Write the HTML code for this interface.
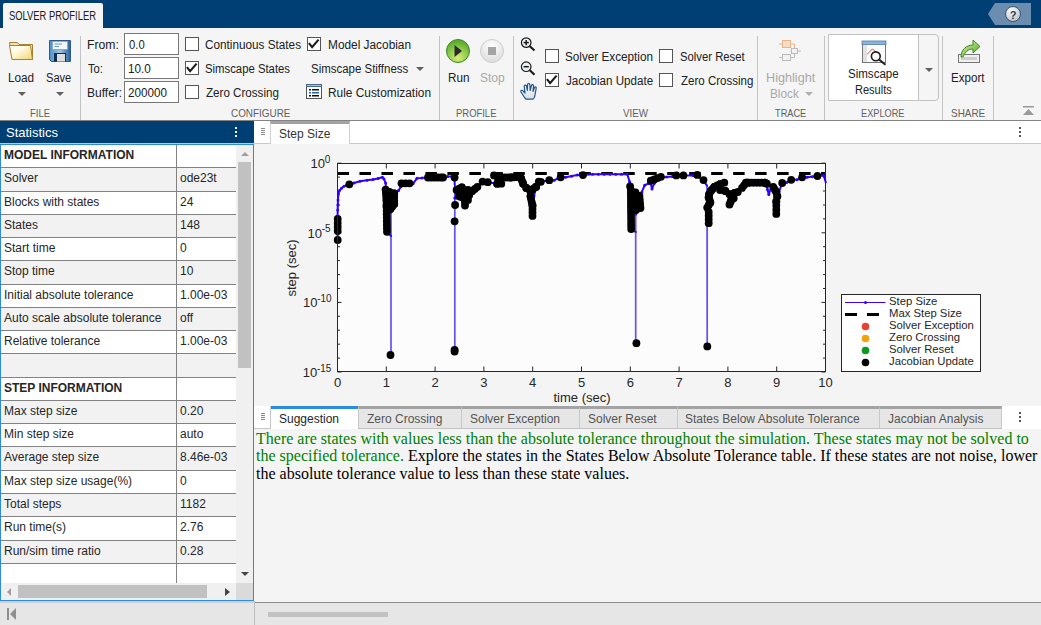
<!DOCTYPE html>
<html><head><meta charset="utf-8">
<style>
*{box-sizing:border-box;margin:0;padding:0}
html,body{width:1041px;height:625px;overflow:hidden;background:#f5f5f5;font-family:"Liberation Sans",sans-serif;}
.a{position:absolute}
.t{position:absolute;white-space:nowrap;line-height:1;color:#212121}
.ts{font-size:11.5px}
.lbl{font-size:11px;color:#5f5f5f;letter-spacing:-0.2px}
.sep{position:absolute;top:36px;height:84px;width:1px;background:#c4c4c4}
.cb{position:absolute;width:14px;height:14px;border:1px solid #555;background:#fff}
.cb svg{position:absolute;left:0;top:0}
.tb{position:absolute;width:55px;height:22px;border:1px solid #777;background:#fff;font-size:12px;padding-left:4px;line-height:20px;color:#212121}
.arr{position:absolute;width:0;height:0;border-left:4px solid transparent;border-right:4px solid transparent;border-top:4px solid #616161}
.row{position:absolute;left:1px;width:235px;border-bottom:1px solid #828282}
.c1{position:absolute;left:3px;font-size:12px;color:#262626;white-space:nowrap;line-height:1}
.c2{position:absolute;left:179px;font-size:12px;color:#262626;white-space:nowrap;line-height:1}
.tab{position:absolute;top:406px;height:23px;background:#e6e6e6;border-top:3px solid #a3a3a3;border-left:1px solid #c8c8c8;border-bottom:1px solid #c4c4c4;font-size:12px;color:#545454;line-height:1}
.tab span{position:absolute;top:4px;white-space:nowrap}
</style></head>
<body>
<!-- TOP BAR -->
<div class="a" style="left:0;top:0;width:1041px;height:28px;background:#003f74"></div>
<div class="a" style="left:3px;top:3px;width:100px;height:25px;background:#f5f5f5;border-radius:2px 2px 0 0"></div>
<!-- help -->
<svg class="a" style="left:985px;top:0" width="56" height="28">
 <polygon points="3,14 10,3 46,3 46,25 10,25" fill="#6b8db0"/>
 <defs><radialGradient id="hg" cx="40%" cy="30%" r="70%"><stop offset="0" stop-color="#ffffff"/><stop offset="1" stop-color="#b9c2cc"/></radialGradient></defs>
 <circle cx="28" cy="14" r="7.5" fill="url(#hg)" stroke="#2b3b55" stroke-width="0.8"/>
 <text x="28" y="18.5" text-anchor="middle" font-family="Liberation Sans" font-weight="700" font-size="11" fill="#2b3b55">?</text>
</svg>

<!-- RIBBON -->
<div class="a" style="left:0;top:120px;width:1041px;height:1px;background:#838383"></div>
<div class="sep" style="left:80px"></div>
<div class="sep" style="left:439px"></div>
<div class="sep" style="left:513px"></div>
<div class="sep" style="left:757px"></div>
<div class="sep" style="left:824px"></div>
<div class="sep" style="left:942px"></div>
<div class="sep" style="left:993px"></div>

<!-- FILE -->
<svg class="a" style="left:8px;top:40px" width="28" height="24">
 <defs><linearGradient id="fg" x1="0" y1="0" x2="1" y2="1"><stop offset="0" stop-color="#ffffff"/><stop offset="0.35" stop-color="#fffbe6"/><stop offset="1" stop-color="#f2d66a"/></linearGradient></defs>
 <path d="M1.5,2.5 L9.5,2.5 L11,4.5 L24.5,4.5 L24.5,19.5 L4.5,19.5 Z" fill="#f4e2a8" stroke="#a8802f" stroke-width="1"/>
 <path d="M1.5,5.5 L22.5,5.5 L24.5,19.5 L4,19.5 Z" fill="url(#fg)" stroke="#a8802f" stroke-width="1"/>
</svg>
<svg class="a" style="left:48px;top:39px" width="26" height="26">
 <defs><linearGradient id="sg" x1="0" y1="0" x2="1" y2="0"><stop offset="0" stop-color="#4f8fc8"/><stop offset="0.5" stop-color="#9cc6ea"/><stop offset="1" stop-color="#2a5f95"/></linearGradient></defs>
 <path d="M1.5,1.5 L22.5,1.5 L22.5,22.5 L3.5,22.5 L1.5,20.5 Z" fill="url(#sg)" stroke="#2c5a8a" stroke-width="1"/>
 <rect x="4.5" y="2.5" width="15" height="8" fill="#f4f8fc" stroke="#7aa3c9" stroke-width="0.8"/>
 <line x1="6.5" y1="5" x2="14" y2="5" stroke="#6b96c0" stroke-width="1"/>
 <line x1="6.5" y1="7.5" x2="11" y2="7.5" stroke="#6b96c0" stroke-width="1"/>
 <rect x="6" y="14" width="12" height="8.5" fill="#0f2e55"/>
 <rect x="9" y="15" width="8" height="7.5" fill="#dedede"/>
</svg>
<div class="arr" style="left:18px;top:92px"></div>
<div class="arr" style="left:56px;top:92px"></div>

<!-- CONFIGURE -->
<div class="tb" style="left:124px;top:33px"></div>
<div class="tb" style="left:124px;top:57px"></div>
<div class="tb" style="left:124px;top:81px"></div>
<div class="cb" style="left:185px;top:37px"></div>
<div class="cb" style="left:185px;top:61px"><svg width="12" height="12"><path d="M0.9,5.2 L4.1,9.2 L10.6,1.6" fill="none" stroke="#1a1a1a" stroke-width="2.1"/></svg></div>
<div class="cb" style="left:185px;top:85px"></div>
<div class="cb" style="left:307px;top:37px"><svg width="12" height="12"><path d="M0.9,5.2 L4.1,9.2 L10.6,1.6" fill="none" stroke="#1a1a1a" stroke-width="2.1"/></svg></div>
<div class="arr" style="left:416px;top:67px"></div>
<svg class="a" style="left:305px;top:83px" width="18" height="18">
 <rect x="1.5" y="1.5" width="15" height="14" fill="#fafafa" stroke="#555" stroke-width="1"/>
 <rect x="1" y="1" width="16" height="3" fill="#4a6a8c"/>
 <rect x="2" y="2" width="14" height="1" fill="#9cc3e4"/>
 <rect x="4" y="6" width="2" height="1.5" fill="#111"/><rect x="7" y="6" width="7" height="1.5" fill="#111"/>
 <rect x="4" y="9" width="2" height="1.5" fill="#2a64a8"/><rect x="7" y="9" width="7" height="1.5" fill="#2a64a8"/>
 <rect x="4" y="12" width="2" height="1.5" fill="#111"/><rect x="7" y="12" width="7" height="1.5" fill="#111"/>
</svg>

<!-- PROFILE -->
<svg class="a" style="left:444px;top:37px" width="64" height="28">
 <defs>
  <radialGradient id="rg" cx="50%" cy="80%" r="70%"><stop offset="0" stop-color="#d6f07a"/><stop offset="1" stop-color="#5fae2e"/></radialGradient>
  <radialGradient id="stg" cx="50%" cy="30%" r="70%"><stop offset="0" stop-color="#ffffff"/><stop offset="1" stop-color="#dcdcdc"/></radialGradient>
 </defs>
 <circle cx="14" cy="14" r="11.5" fill="url(#rg)" stroke="#3d8a2a" stroke-width="1"/>
 <path d="M10.5,8 L18,14 L10.5,20 Z" fill="#2a2a2a"/>
 <circle cx="48" cy="14" r="11.5" fill="url(#stg)" stroke="#cfcfcf" stroke-width="1"/>
 <rect x="44" y="10" width="8" height="8" fill="#a5a5a5"/>
</svg>

<!-- VIEW -->
<svg class="a" style="left:519px;top:35px" width="20" height="68">
 <defs><linearGradient id="hd" x1="0" y1="0" x2="0" y2="1"><stop offset="0" stop-color="#ffffff"/><stop offset="1" stop-color="#d8dde3"/></linearGradient></defs>
 <g fill="none" stroke="#1a1a1a">
  <circle cx="7.2" cy="7.6" r="4.8" stroke-width="1.2" fill="#e9f0f6"/>
  <line x1="10.8" y1="11.2" x2="15.5" y2="15.6" stroke-width="2.1"/>
  <line x1="4.6" y1="7.6" x2="9.8" y2="7.6" stroke-width="1.5"/><line x1="7.2" y1="5" x2="7.2" y2="10.2" stroke-width="1.5"/>
  <circle cx="7.2" cy="31.7" r="4.8" stroke-width="1.2" fill="#e9f0f6"/>
  <line x1="10.8" y1="35.3" x2="15.5" y2="39.7" stroke-width="2.1"/>
  <line x1="4.6" y1="31.7" x2="9.8" y2="31.7" stroke-width="1.5"/>
 </g>
 <path d="M5.5,62.5 C4,60 2.2,57.5 1.8,56.5 C1.5,55.3 3,54.8 4,55.8 L6,58 L5.2,51.5 C5,49.8 7,49.5 7.4,51 L8.3,55.5 L8.6,49.5 C8.7,48 10.6,48 10.8,49.5 L11.2,55.5 L12.4,50.5 C12.8,49.2 14.6,49.4 14.5,50.8 L14,56.5 L15.5,52.5 C16,51.4 17.5,51.8 17.2,53.2 L16,60 C15.6,62.2 14.8,64 13.8,64.2 L7,64.2 Z" fill="url(#hd)" stroke="#24558a" stroke-width="1.2" stroke-linejoin="round"/>
</svg>
<div class="cb" style="left:545px;top:49px"></div>
<div class="cb" style="left:545px;top:73px"><svg width="12" height="12"><path d="M0.9,5.2 L4.1,9.2 L10.6,1.6" fill="none" stroke="#1a1a1a" stroke-width="2.1"/></svg></div>
<div class="cb" style="left:659px;top:49px"></div>
<div class="cb" style="left:659px;top:73px"></div>

<!-- TRACE -->
<svg class="a" style="left:777px;top:37px" width="28" height="28">
 <rect x="5.5" y="3.5" width="8" height="7" fill="#f8dcc0" stroke="#e8b48a" stroke-width="1"/>
 <line x1="2" y1="7" x2="5.5" y2="7" stroke="#bbb"/>
 <path d="M13.5,7 L17.5,7 L17.5,11.5" fill="none" stroke="#e8b48a"/>
 <rect x="14.5" y="11.5" width="6" height="5" fill="#f2f2f2" stroke="#bbb"/>
 <line x1="20.5" y1="14" x2="24" y2="14" stroke="#bbb"/>
 <rect x="5.5" y="17.5" width="8" height="6" fill="#f2f2f2" stroke="#bbb"/>
 <line x1="2" y1="20.5" x2="5.5" y2="20.5" stroke="#bbb"/>
 <path d="M13.5,20.5 L17.5,20.5 L17.5,16.5" fill="none" stroke="#bbb"/>
</svg>
<div class="arr" style="left:805px;top:92px;border-top-color:#b0b0b0"></div>

<!-- EXPLORE -->
<div class="a" style="left:828px;top:34px;width:111px;height:67px;border:1px solid #c2c2c2;border-radius:0 4px 4px 0;background:#f5f5f5"></div>
<div class="a" style="left:829px;top:35px;width:90px;height:65px;background:#fff;border-right:1px solid #c2c2c2"></div>
<svg class="a" style="left:860px;top:39px" width="28" height="28">
 <rect x="2.5" y="2.5" width="23" height="21" fill="#fbfbfb" stroke="#777" stroke-width="1"/>
 <rect x="3" y="6" width="4" height="17" fill="#e2e2e2"/>
 <rect x="2" y="2" width="24" height="3.5" fill="#8db5dc" stroke="#4f7aa6" stroke-width="0.8"/>
 <path d="M7,15.5 L12.3,10 L21,16.8" fill="none" stroke="#d4563a" stroke-width="1"/>
 <circle cx="15.8" cy="17.3" r="4.4" fill="rgba(255,255,255,0.6)" stroke="#1e1e1e" stroke-width="1.6"/>
 <line x1="19" y1="20.5" x2="25.5" y2="25.8" stroke="#1e1e1e" stroke-width="2"/>
</svg>
<div class="arr" style="left:925px;top:68px"></div>

<!-- SHARE -->
<svg class="a" style="left:955px;top:37px" width="28" height="28">
 <defs><linearGradient id="eg" x1="0" y1="0" x2="1" y2="1"><stop offset="0" stop-color="#e6f6a0"/><stop offset="1" stop-color="#4aa52a"/></linearGradient></defs>
 <rect x="3.5" y="17.5" width="21" height="8" fill="#f0f0f0" stroke="#777" stroke-width="1"/>
 <rect x="6" y="20" width="16" height="3" fill="#cfcfcf"/>
 <path d="M6,20 C6,13 11,8 18,8 L18,3 L25,9.5 L18,16 L18,12 C13,12 10,15 8,20 Z" fill="url(#eg)" stroke="#3a8a2a" stroke-width="1"/>
</svg>
<svg class="a" style="left:1022px;top:105px" width="14" height="12">
 <rect x="1" y="1" width="11" height="1.5" fill="#9a9a9a"/>
 <path d="M1,10 L6.5,4 L12,10 Z" fill="#9a9a9a"/>
</svg>

<!-- LEFT PANEL -->
<div class="a" style="left:0;top:121px;width:254px;height:22px;background:#003f74"></div>
<div class="t" style="left:6px;top:125.5px;font-size:13px;color:#fff">Statistics</div>
<div class="a" style="left:235px;top:127px;width:2px;height:2px;background:#fff"></div><div class="a" style="left:235px;top:131px;width:2px;height:2px;background:#fff"></div><div class="a" style="left:235px;top:135px;width:2px;height:2px;background:#fff"></div>
<div class="a" style="left:0;top:143px;width:254px;height:1px;background:#c8c8c8"></div>
<div id="stats" class="a" style="left:0;top:144px;width:254px;height:457px;border:1px solid #2d8ae0;background:#fff;overflow:hidden"></div>

<!-- STATUS BAR -->
<div class="a" style="left:0;top:601px;width:254px;height:2px;background:#d0d0d0"></div>
<div class="a" style="left:254px;top:601px;width:787px;height:1px;background:#f4f4f4"></div>
<div class="a" style="left:254px;top:602px;width:787px;height:1px;background:#8c8c8c"></div>
<div class="a" style="left:0;top:603px;width:1041px;height:22px;background:#e6e6e6"></div>
<div class="a" style="left:254px;top:601px;width:1px;height:24px;background:#bdbdbd"></div>
<svg class="a" style="left:6px;top:607px" width="12" height="14"><rect x="1" y="1" width="2" height="12" fill="#8e8e8e"/><path d="M10,1 L4,7 L10,13 Z" fill="#8e8e8e"/></svg>
<div class="a" style="left:268px;top:612px;width:120px;height:5px;background:#c2c2c2"></div>

<!-- RIGHT MAIN -->
<div class="a" style="left:254px;top:121px;width:787px;height:22px;background:#fff"></div>
<div class="a" style="left:254px;top:143px;width:787px;height:1px;background:#c8c8c8"></div>
<div class="a" style="left:254px;top:144px;width:787px;height:261px;background:#f4f4f4"></div>
<div class="a" style="left:270px;top:121px;width:80px;height:23px;background:#fff;border-top:3px solid #a3a3a3;border-left:1px solid #d0d0d0;border-right:1px solid #d0d0d0"></div>
<div class="t" style="left:279px;top:128px;font-size:12px;color:#333">Step Size</div>


<div class="t" style="left:9px;top:10px;font-size:12px;color:#212121;transform:scaleX(0.782);transform-origin:0 0;">SOLVER PROFILER</div>
<div class="t" style="left:7.5px;top:72px;font-size:12px;color:#212121;transform:scaleX(0.98);transform-origin:0 0;">Load</div>
<div class="t" style="left:46px;top:72px;font-size:12px;color:#212121;transform:scaleX(0.923);transform-origin:0 0;">Save</div>
<div class="t" style="left:87px;top:39px;font-size:12px;color:#212121;transform:scaleX(1.017);transform-origin:0 0;">From:</div>
<div class="t" style="left:88px;top:63px;font-size:12px;color:#212121;transform:scaleX(0.933);transform-origin:0 0;">To:</div>
<div class="t" style="left:87px;top:87px;font-size:12px;color:#212121;transform:scaleX(1.0);transform-origin:0 0;">Buffer:</div>
<div class="t" style="left:129px;top:39px;font-size:12px;color:#212121;transform:scaleX(0.938);transform-origin:0 0;">0.0</div>
<div class="t" style="left:128px;top:63px;font-size:12px;color:#212121;transform:scaleX(0.977);transform-origin:0 0;">10.0</div>
<div class="t" style="left:128px;top:87px;font-size:12px;color:#212121;transform:scaleX(0.974);transform-origin:0 0;">200000</div>
<div class="t" style="left:205px;top:39px;font-size:12px;color:#212121;transform:scaleX(0.979);transform-origin:0 0;">Continuous States</div>
<div class="t" style="left:205px;top:63px;font-size:12px;color:#212121;transform:scaleX(0.944);transform-origin:0 0;">Simscape States</div>
<div class="t" style="left:206px;top:87px;font-size:12px;color:#212121;transform:scaleX(0.967);transform-origin:0 0;">Zero Crossing</div>
<div class="t" style="left:328px;top:39px;font-size:12px;color:#212121;transform:scaleX(0.988);transform-origin:0 0;">Model Jacobian</div>
<div class="t" style="left:311px;top:63px;font-size:12px;color:#212121;transform:scaleX(0.955);transform-origin:0 0;">Simscape Stiffness</div>
<div class="t" style="left:328px;top:87px;font-size:12px;color:#212121;transform:scaleX(0.99);transform-origin:0 0;">Rule Customization</div>
<div class="t" style="left:447.5px;top:72px;font-size:12px;color:#212121;transform:scaleX(0.975);transform-origin:0 0;">Run</div>
<div class="t" style="left:480px;top:72px;font-size:12px;color:#a8a8a8;transform:scaleX(1.0);transform-origin:0 0;">Stop</div>
<div class="t" style="left:565px;top:51px;font-size:12px;color:#212121;transform:scaleX(0.977);transform-origin:0 0;">Solver Exception</div>
<div class="t" style="left:566px;top:75px;font-size:12px;color:#212121;transform:scaleX(0.967);transform-origin:0 0;">Jacobian Update</div>
<div class="t" style="left:680px;top:51px;font-size:12px;color:#212121;transform:scaleX(0.941);transform-origin:0 0;">Solver Reset</div>
<div class="t" style="left:681px;top:75px;font-size:12px;color:#212121;transform:scaleX(0.96);transform-origin:0 0;">Zero Crossing</div>
<div class="t" style="left:765.5px;top:72px;font-size:12px;color:#a8a8a8;transform:scaleX(1.054);transform-origin:0 0;">Highlight</div>
<div class="t" style="left:769.5px;top:88px;font-size:12px;color:#a8a8a8;transform:scaleX(0.982);transform-origin:0 0;">Block</div>
<div class="t" style="left:848px;top:67.5px;font-size:12px;color:#212121;transform:scaleX(0.961);transform-origin:0 0;">Simscape</div>
<div class="t" style="left:855.4px;top:84px;font-size:12px;color:#212121;transform:scaleX(0.918);transform-origin:0 0;">Results</div>
<div class="t" style="left:950.5px;top:72px;font-size:12px;color:#212121;transform:scaleX(0.965);transform-origin:0 0;">Export</div>
<div class="t" style="left:30px;top:108px;font-size:11px;color:#5f5f5f;transform:scaleX(0.864);transform-origin:0 0;">FILE</div>
<div class="t" style="left:231px;top:108px;font-size:11px;color:#5f5f5f;transform:scaleX(0.9);transform-origin:0 0;">CONFIGURE</div>
<div class="t" style="left:455.5px;top:108px;font-size:11px;color:#5f5f5f;transform:scaleX(0.859);transform-origin:0 0;">PROFILE</div>
<div class="t" style="left:623px;top:108px;font-size:11px;color:#5f5f5f;transform:scaleX(0.893);transform-origin:0 0;">VIEW</div>
<div class="t" style="left:775px;top:108px;font-size:11px;color:#5f5f5f;transform:scaleX(0.838);transform-origin:0 0;">TRACE</div>
<div class="t" style="left:861px;top:108px;font-size:11px;color:#5f5f5f;transform:scaleX(0.837);transform-origin:0 0;">EXPLORE</div>
<div class="t" style="left:950.5px;top:108px;font-size:11px;color:#5f5f5f;transform:scaleX(0.903);transform-origin:0 0;">SHARE</div>
<div class="a" style="left:1px;top:145px;width:235px;height:22px;background:#fff"></div>
<div class="a" style="left:1px;top:167px;width:235px;height:1px;background:#828282"></div>
<div class="c1" style="left:4px;top:149px;font-weight:700;">MODEL INFORMATION</div>
<div class="a" style="left:1px;top:168px;width:235px;height:23px;background:#f2f2f2"></div>
<div class="a" style="left:1px;top:191px;width:235px;height:1px;background:#828282"></div>
<div class="c1" style="left:4px;top:172px;">Solver</div>
<div class="c2" style="left:180px;top:172px">ode23t</div>
<div class="a" style="left:1px;top:192px;width:235px;height:22px;background:#fff"></div>
<div class="a" style="left:1px;top:214px;width:235px;height:1px;background:#828282"></div>
<div class="c1" style="left:4px;top:196px;">Blocks with states</div>
<div class="c2" style="left:180px;top:196px">24</div>
<div class="a" style="left:1px;top:215px;width:235px;height:22px;background:#f2f2f2"></div>
<div class="a" style="left:1px;top:237px;width:235px;height:1px;background:#828282"></div>
<div class="c1" style="left:4px;top:219px;">States</div>
<div class="c2" style="left:180px;top:219px">148</div>
<div class="a" style="left:1px;top:238px;width:235px;height:22px;background:#fff"></div>
<div class="a" style="left:1px;top:260px;width:235px;height:1px;background:#828282"></div>
<div class="c1" style="left:4px;top:242px;">Start time</div>
<div class="c2" style="left:180px;top:242px">0</div>
<div class="a" style="left:1px;top:261px;width:235px;height:23px;background:#f2f2f2"></div>
<div class="a" style="left:1px;top:284px;width:235px;height:1px;background:#828282"></div>
<div class="c1" style="left:4px;top:265px;">Stop time</div>
<div class="c2" style="left:180px;top:265px">10</div>
<div class="a" style="left:1px;top:285px;width:235px;height:22px;background:#fff"></div>
<div class="a" style="left:1px;top:307px;width:235px;height:1px;background:#828282"></div>
<div class="c1" style="left:4px;top:289px;">Initial absolute tolerance</div>
<div class="c2" style="left:180px;top:289px">1.00e-03</div>
<div class="a" style="left:1px;top:308px;width:235px;height:22px;background:#f2f2f2"></div>
<div class="a" style="left:1px;top:330px;width:235px;height:1px;background:#828282"></div>
<div class="c1" style="left:4px;top:312px;">Auto scale absolute tolerance</div>
<div class="c2" style="left:180px;top:312px">off</div>
<div class="a" style="left:1px;top:331px;width:235px;height:22px;background:#fff"></div>
<div class="a" style="left:1px;top:353px;width:235px;height:1px;background:#828282"></div>
<div class="c1" style="left:4px;top:335px;">Relative tolerance</div>
<div class="c2" style="left:180px;top:335px">1.00e-03</div>
<div class="a" style="left:1px;top:354px;width:235px;height:23px;background:#f2f2f2"></div>
<div class="a" style="left:1px;top:377px;width:235px;height:1px;background:#828282"></div>
<div class="a" style="left:1px;top:378px;width:235px;height:22px;background:#fff"></div>
<div class="a" style="left:1px;top:400px;width:235px;height:1px;background:#828282"></div>
<div class="c1" style="left:4px;top:382px;font-weight:700;">STEP INFORMATION</div>
<div class="a" style="left:1px;top:401px;width:235px;height:22px;background:#f2f2f2"></div>
<div class="a" style="left:1px;top:423px;width:235px;height:1px;background:#828282"></div>
<div class="c1" style="left:4px;top:405px;">Max step size</div>
<div class="c2" style="left:180px;top:405px">0.20</div>
<div class="a" style="left:1px;top:424px;width:235px;height:22px;background:#fff"></div>
<div class="a" style="left:1px;top:446px;width:235px;height:1px;background:#828282"></div>
<div class="c1" style="left:4px;top:428px;">Min step size</div>
<div class="c2" style="left:180px;top:428px">auto</div>
<div class="a" style="left:1px;top:447px;width:235px;height:23px;background:#f2f2f2"></div>
<div class="a" style="left:1px;top:470px;width:235px;height:1px;background:#828282"></div>
<div class="c1" style="left:4px;top:451px;">Average step size</div>
<div class="c2" style="left:180px;top:451px">8.46e-03</div>
<div class="a" style="left:1px;top:471px;width:235px;height:22px;background:#fff"></div>
<div class="a" style="left:1px;top:493px;width:235px;height:1px;background:#828282"></div>
<div class="c1" style="left:4px;top:475px;">Max step size usage(%)</div>
<div class="c2" style="left:180px;top:475px">0</div>
<div class="a" style="left:1px;top:494px;width:235px;height:22px;background:#f2f2f2"></div>
<div class="a" style="left:1px;top:516px;width:235px;height:1px;background:#828282"></div>
<div class="c1" style="left:4px;top:498px;">Total steps</div>
<div class="c2" style="left:180px;top:498px">1182</div>
<div class="a" style="left:1px;top:517px;width:235px;height:23px;background:#fff"></div>
<div class="a" style="left:1px;top:540px;width:235px;height:1px;background:#828282"></div>
<div class="c1" style="left:4px;top:521px;">Run time(s)</div>
<div class="c2" style="left:180px;top:521px">2.76</div>
<div class="a" style="left:1px;top:541px;width:235px;height:22px;background:#f2f2f2"></div>
<div class="a" style="left:1px;top:563px;width:235px;height:1px;background:#828282"></div>
<div class="c1" style="left:4px;top:545px;">Run/sim time ratio</div>
<div class="c2" style="left:180px;top:545px">0.28</div>
<div class="a" style="left:1px;top:564px;width:235px;height:19px;background:#fff"></div>
<div class="a" style="left:176px;top:145px;width:1px;height:438px;background:#828282"></div>
<!-- vertical scrollbar -->
<div class="a" style="left:236px;top:145px;width:17px;height:438px;background:#f0f0f0"></div>
<div class="a" style="left:238px;top:162px;width:13px;height:206px;background:#c1c1c1"></div>
<div class="arr" style="left:241px;top:152px;border-top:0;border-bottom:4px solid #a0a0a0"></div>
<div class="arr" style="left:241px;top:572px;border-top-color:#444"></div>
<!-- horizontal scrollbar -->
<div class="a" style="left:1px;top:583px;width:235px;height:17px;background:#f0f0f0"></div>
<div class="a" style="left:18px;top:585px;width:189px;height:13px;background:#c1c1c1"></div>
<div class="a" style="left:7px;top:588px;width:0;height:0;border-top:4px solid transparent;border-bottom:4px solid transparent;border-right:4px solid #a0a0a0"></div>
<div class="a" style="left:225px;top:588px;width:0;height:0;border-top:4px solid transparent;border-bottom:4px solid transparent;border-left:5px solid #444"></div>
<div class="a" style="left:236px;top:583px;width:17px;height:17px;background:#dadada"></div>
<svg class="a" style="left:254px;top:144px" width="787" height="261" viewBox="254 144 787 261">
<rect x="337.5" y="163.5" width="488.0" height="208.0" fill="#fcfcfc"/>
<path d="M337.5,371.5 v-5 M337.5,163.5 v5 M386.3,371.5 v-5 M386.3,163.5 v5 M435.1,371.5 v-5 M435.1,163.5 v5 M483.9,371.5 v-5 M483.9,163.5 v5 M532.7,371.5 v-5 M532.7,163.5 v5 M581.5,371.5 v-5 M581.5,163.5 v5 M630.3,371.5 v-5 M630.3,163.5 v5 M679.1,371.5 v-5 M679.1,163.5 v5 M727.9,371.5 v-5 M727.9,163.5 v5 M776.7,371.5 v-5 M776.7,163.5 v5 M825.5,371.5 v-5 M825.5,163.5 v5 M337.5,163.2 h4 M825.5,163.2 h-4 M337.5,177.1 h2.5 M825.5,177.1 h-2.5 M337.5,191.0 h2.5 M825.5,191.0 h-2.5 M337.5,205.0 h2.5 M825.5,205.0 h-2.5 M337.5,218.9 h2.5 M825.5,218.9 h-2.5 M337.5,232.8 h4 M825.5,232.8 h-4 M337.5,246.7 h2.5 M825.5,246.7 h-2.5 M337.5,260.6 h2.5 M825.5,260.6 h-2.5 M337.5,274.6 h2.5 M825.5,274.6 h-2.5 M337.5,288.5 h2.5 M825.5,288.5 h-2.5 M337.5,302.4 h4 M825.5,302.4 h-4 M337.5,316.3 h2.5 M825.5,316.3 h-2.5 M337.5,330.2 h2.5 M825.5,330.2 h-2.5 M337.5,344.2 h2.5 M825.5,344.2 h-2.5 M337.5,358.1 h2.5 M825.5,358.1 h-2.5 M337.5,372.0 h4 M825.5,372.0 h-4" stroke="#262626" stroke-width="1" fill="none"/>
<line x1="337.5" y1="173.5" x2="825.5" y2="173.5" stroke="#000" stroke-width="3" stroke-dasharray="11.5 10.48"/>
<path d="M391,236 L391,355 M391,355 L391,212 M454.8,185 L454.8,350.5 M454.8,350.5 L454.8,198 M635.7,232 L635.7,343 M635.7,343 L635.7,214 M707,185.6 L707.2,346.4 M707.2,346.4 L707.2,210" fill="none" stroke="#6650f2" stroke-width="1.7"/>
<path d="M337.6,240 L337.6,231 M337.6,231 L337.5,222 M337.5,222 L337.7,210 M337.7,210 L338.0,200 M338.0,200 L338.4,194 M338.4,194 L339.5,190.5 M339.5,190.5 L341.5,188.2 M341.5,188.2 L344,186.3 M344,186.3 L347,185 M347,185 L349.3,184.3 M349.3,184.3 L354,183 M354,183 L360,181.3 M360,181.3 L367,180.3 M367,180.3 L373,179.5 M373,179.5 L378,178.5 M378,178.5 L382.4,177.2 M382.4,177.2 L384,179 M384,179 L385.6,183 M385.6,183 L386,190 M386,190 L386.5,200 M386.5,200 L387,215 M387,215 L387,232 M387,232 L391,236 M391,212 L394,206 M394,206 L394.5,195 M394.5,195 L398.5,190.6 M398.5,190.6 L400.9,186.7 M400.9,186.7 L405,184 M405,184 L410,183.5 M410,183.5 L413,183.7 M413,183.7 L417,178.3 M417,178.3 L422,178 M422,178 L426,177.5 M426,177.5 L436,177 M436,177 L445.5,177.1 M445.5,177.1 L447.8,176.6 M447.8,176.6 L452,176.6 M452,176.6 L454.4,177.5 M454.4,177.5 L454.8,185 M454.8,198 L459,199 M459,199 L457.5,189.1 M457.5,189.1 L464.2,196.8 M464.2,196.8 L464.2,206 M464.2,206 L464.2,197 M464.2,197 L470.9,191 M470.9,191 L477.6,186.7 M477.6,186.7 L483.4,181.9 M483.4,181.9 L489.1,182.4 M489.1,182.4 L496.8,183.4 M496.8,183.4 L500.7,182.9 M500.7,182.9 L504,177.3 M504,177.3 L511.8,177.3 M511.8,177.3 L519.5,176.6 M519.5,176.6 L523.3,182.4 M523.3,182.4 L527.2,187.5 M527.2,187.5 L531,192 M531,192 L532.3,202 M532.3,202 L532.3,216 M532.3,216 L534,196 M534,196 L536.2,186.9 M536.2,186.9 L538.7,182.4 M538.7,182.4 L540.8,181.8 M540.8,181.8 L549.3,180.2 M549.3,180.2 L554.2,180.2 M554.2,180.2 L560.6,177.3 M560.6,177.3 L565.7,177.3 M565.7,177.3 L577.3,175.1 M577.3,175.1 L583,175.1 M583,175.1 L592.6,174.3 M592.6,174.3 L627.3,174.3 M627.3,174.3 L629.6,181.8 M629.6,181.8 L630.1,186.3 M630.1,186.3 L631,190 M631,190 L631,229 M631,229 L635.7,232 M635.7,214 L640,205 M640,205 L641.9,191.9 M641.9,191.9 L644.7,185.2 M644.7,185.2 L648.6,183.5 M648.6,183.5 L650.8,183.5 M650.8,183.5 L652,189 M652,189 L654.2,183.5 M654.2,183.5 L660.9,177.5 M660.9,177.5 L672.5,176.6 M672.5,176.6 L676.3,175.6 M676.3,175.6 L683.4,175.6 M683.4,175.6 L693,175.4 M693,175.4 L696.8,175.4 M696.8,175.4 L703.2,180.5 M703.2,180.5 L707,185.6 M707.2,210 L709.6,225 M709.6,225 L709.6,193.3 M709.6,193.3 L717.3,185.6 M717.3,185.6 L722.4,181.8 M722.4,181.8 L724.6,183 M724.6,183 L721.4,190.7 M721.4,190.7 L727.8,192 M727.8,192 L730.4,204.8 M730.4,204.8 L735.5,192.7 M735.5,192.7 L741.9,187 M741.9,187 L745.7,183 M745.7,183 L766.2,183 M766.2,183 L767.5,189.4 M767.5,189.4 L768.8,194.6 M768.8,194.6 L771.3,187 M771.3,187 L775.2,192 M775.2,192 L775.2,213.8 M775.2,213.8 L779,192 M779,192 L782.2,183 M782.2,183 L786.7,182.4 M786.7,182.4 L791.2,179.8 M791.2,179.8 L797,179.8 M797,179.8 L802.1,177.3 M802.1,177.3 L807.2,177.3 M807.2,177.3 L817.4,176 M817.4,176 L823.8,175.4 M823.8,175.4 L825.8,182.4" fill="none" stroke="#3300ff" stroke-width="2" stroke-linecap="round"/>
<g fill="#3300ff"><circle cx="337.60" cy="240.00" r="1.5"/><circle cx="337.60" cy="231.00" r="1.5"/><circle cx="337.50" cy="222.00" r="1.5"/><circle cx="337.60" cy="216.00" r="1.5"/><circle cx="337.70" cy="210.00" r="1.5"/><circle cx="337.85" cy="205.00" r="1.5"/><circle cx="338.00" cy="200.00" r="1.5"/><circle cx="338.40" cy="194.00" r="1.5"/><circle cx="339.50" cy="190.50" r="1.5"/><circle cx="341.50" cy="188.20" r="1.5"/><circle cx="344.00" cy="186.30" r="1.5"/><circle cx="347.00" cy="185.00" r="1.5"/><circle cx="349.30" cy="184.30" r="1.5"/><circle cx="354.00" cy="183.00" r="1.5"/><circle cx="360.00" cy="181.30" r="1.5"/><circle cx="367.00" cy="180.30" r="1.5"/><circle cx="373.00" cy="179.50" r="1.5"/><circle cx="378.00" cy="178.50" r="1.5"/><circle cx="382.40" cy="177.20" r="1.5"/><circle cx="384.00" cy="179.00" r="1.5"/><circle cx="385.60" cy="183.00" r="1.5"/><circle cx="386.00" cy="190.00" r="1.5"/><circle cx="386.25" cy="195.00" r="1.5"/><circle cx="386.50" cy="200.00" r="1.5"/><circle cx="386.67" cy="205.00" r="1.5"/><circle cx="386.83" cy="210.00" r="1.5"/><circle cx="387.00" cy="215.00" r="1.5"/><circle cx="387.00" cy="220.67" r="1.5"/><circle cx="387.00" cy="226.33" r="1.5"/><circle cx="387.00" cy="232.00" r="1.5"/><circle cx="391.00" cy="212.00" r="1.5"/><circle cx="394.00" cy="206.00" r="1.5"/><circle cx="394.25" cy="200.50" r="1.5"/><circle cx="394.50" cy="195.00" r="1.5"/><circle cx="398.50" cy="190.60" r="1.5"/><circle cx="400.90" cy="186.70" r="1.5"/><circle cx="405.00" cy="184.00" r="1.5"/><circle cx="410.00" cy="183.50" r="1.5"/><circle cx="413.00" cy="183.70" r="1.5"/><circle cx="417.00" cy="178.30" r="1.5"/><circle cx="422.00" cy="178.00" r="1.5"/><circle cx="426.00" cy="177.50" r="1.5"/><circle cx="431.00" cy="177.25" r="1.5"/><circle cx="436.00" cy="177.00" r="1.5"/><circle cx="445.50" cy="177.10" r="1.5"/><circle cx="447.80" cy="176.60" r="1.5"/><circle cx="452.00" cy="176.60" r="1.5"/><circle cx="454.40" cy="177.50" r="1.5"/><circle cx="454.80" cy="198.00" r="1.5"/><circle cx="459.00" cy="199.00" r="1.5"/><circle cx="458.25" cy="194.05" r="1.5"/><circle cx="457.50" cy="189.10" r="1.5"/><circle cx="460.85" cy="192.95" r="1.5"/><circle cx="464.20" cy="196.80" r="1.5"/><circle cx="464.20" cy="206.00" r="1.5"/><circle cx="464.20" cy="197.00" r="1.5"/><circle cx="470.90" cy="191.00" r="1.5"/><circle cx="477.60" cy="186.70" r="1.5"/><circle cx="483.40" cy="181.90" r="1.5"/><circle cx="489.10" cy="182.40" r="1.5"/><circle cx="496.80" cy="183.40" r="1.5"/><circle cx="500.70" cy="182.90" r="1.5"/><circle cx="504.00" cy="177.30" r="1.5"/><circle cx="511.80" cy="177.30" r="1.5"/><circle cx="519.50" cy="176.60" r="1.5"/><circle cx="523.30" cy="182.40" r="1.5"/><circle cx="527.20" cy="187.50" r="1.5"/><circle cx="531.00" cy="192.00" r="1.5"/><circle cx="531.65" cy="197.00" r="1.5"/><circle cx="532.30" cy="202.00" r="1.5"/><circle cx="532.30" cy="209.00" r="1.5"/><circle cx="532.30" cy="216.00" r="1.5"/><circle cx="532.72" cy="211.00" r="1.5"/><circle cx="533.15" cy="206.00" r="1.5"/><circle cx="533.58" cy="201.00" r="1.5"/><circle cx="534.00" cy="196.00" r="1.5"/><circle cx="536.20" cy="186.90" r="1.5"/><circle cx="538.70" cy="182.40" r="1.5"/><circle cx="540.80" cy="181.80" r="1.5"/><circle cx="549.30" cy="180.20" r="1.5"/><circle cx="554.20" cy="180.20" r="1.5"/><circle cx="560.60" cy="177.30" r="1.5"/><circle cx="565.70" cy="177.30" r="1.5"/><circle cx="571.50" cy="176.20" r="1.5"/><circle cx="577.30" cy="175.10" r="1.5"/><circle cx="583.00" cy="175.10" r="1.5"/><circle cx="592.60" cy="174.30" r="1.5"/><circle cx="598.38" cy="174.30" r="1.5"/><circle cx="604.17" cy="174.30" r="1.5"/><circle cx="609.95" cy="174.30" r="1.5"/><circle cx="615.73" cy="174.30" r="1.5"/><circle cx="621.52" cy="174.30" r="1.5"/><circle cx="627.30" cy="174.30" r="1.5"/><circle cx="629.60" cy="181.80" r="1.5"/><circle cx="630.10" cy="186.30" r="1.5"/><circle cx="631.00" cy="190.00" r="1.5"/><circle cx="631.00" cy="195.57" r="1.5"/><circle cx="631.00" cy="201.14" r="1.5"/><circle cx="631.00" cy="206.71" r="1.5"/><circle cx="631.00" cy="212.29" r="1.5"/><circle cx="631.00" cy="217.86" r="1.5"/><circle cx="631.00" cy="223.43" r="1.5"/><circle cx="631.00" cy="229.00" r="1.5"/><circle cx="635.70" cy="214.00" r="1.5"/><circle cx="640.00" cy="205.00" r="1.5"/><circle cx="640.95" cy="198.45" r="1.5"/><circle cx="641.90" cy="191.90" r="1.5"/><circle cx="644.70" cy="185.20" r="1.5"/><circle cx="648.60" cy="183.50" r="1.5"/><circle cx="650.80" cy="183.50" r="1.5"/><circle cx="652.00" cy="189.00" r="1.5"/><circle cx="654.20" cy="183.50" r="1.5"/><circle cx="660.90" cy="177.50" r="1.5"/><circle cx="666.70" cy="177.05" r="1.5"/><circle cx="672.50" cy="176.60" r="1.5"/><circle cx="676.30" cy="175.60" r="1.5"/><circle cx="683.40" cy="175.60" r="1.5"/><circle cx="693.00" cy="175.40" r="1.5"/><circle cx="696.80" cy="175.40" r="1.5"/><circle cx="703.20" cy="180.50" r="1.5"/><circle cx="707.20" cy="210.00" r="1.5"/><circle cx="708.00" cy="215.00" r="1.5"/><circle cx="708.80" cy="220.00" r="1.5"/><circle cx="709.60" cy="225.00" r="1.5"/><circle cx="709.60" cy="219.72" r="1.5"/><circle cx="709.60" cy="214.43" r="1.5"/><circle cx="709.60" cy="209.15" r="1.5"/><circle cx="709.60" cy="203.87" r="1.5"/><circle cx="709.60" cy="198.58" r="1.5"/><circle cx="709.60" cy="193.30" r="1.5"/><circle cx="713.45" cy="189.45" r="1.5"/><circle cx="717.30" cy="185.60" r="1.5"/><circle cx="722.40" cy="181.80" r="1.5"/><circle cx="724.60" cy="183.00" r="1.5"/><circle cx="721.40" cy="190.70" r="1.5"/><circle cx="727.80" cy="192.00" r="1.5"/><circle cx="729.10" cy="198.40" r="1.5"/><circle cx="730.40" cy="204.80" r="1.5"/><circle cx="732.95" cy="198.75" r="1.5"/><circle cx="735.50" cy="192.70" r="1.5"/><circle cx="741.90" cy="187.00" r="1.5"/><circle cx="745.70" cy="183.00" r="1.5"/><circle cx="750.83" cy="183.00" r="1.5"/><circle cx="755.95" cy="183.00" r="1.5"/><circle cx="761.08" cy="183.00" r="1.5"/><circle cx="766.20" cy="183.00" r="1.5"/><circle cx="767.50" cy="189.40" r="1.5"/><circle cx="768.80" cy="194.60" r="1.5"/><circle cx="771.30" cy="187.00" r="1.5"/><circle cx="775.20" cy="192.00" r="1.5"/><circle cx="775.20" cy="197.45" r="1.5"/><circle cx="775.20" cy="202.90" r="1.5"/><circle cx="775.20" cy="208.35" r="1.5"/><circle cx="775.20" cy="213.80" r="1.5"/><circle cx="776.15" cy="208.35" r="1.5"/><circle cx="777.10" cy="202.90" r="1.5"/><circle cx="778.05" cy="197.45" r="1.5"/><circle cx="779.00" cy="192.00" r="1.5"/><circle cx="782.20" cy="183.00" r="1.5"/><circle cx="786.70" cy="182.40" r="1.5"/><circle cx="791.20" cy="179.80" r="1.5"/><circle cx="797.00" cy="179.80" r="1.5"/><circle cx="802.10" cy="177.30" r="1.5"/><circle cx="807.20" cy="177.30" r="1.5"/><circle cx="812.30" cy="176.65" r="1.5"/><circle cx="817.40" cy="176.00" r="1.5"/><circle cx="823.80" cy="175.40" r="1.5"/></g>
<g fill="#000">
<circle cx="337.70" cy="219.00" r="3.9"/>
<circle cx="337.70" cy="223.00" r="3.9"/>
<circle cx="337.70" cy="227.00" r="3.9"/>
<circle cx="337.70" cy="231.00" r="3.9"/>
<circle cx="385.60" cy="189.60" r="3.9"/>
<circle cx="385.90" cy="193.07" r="3.9"/>
<circle cx="386.20" cy="196.53" r="3.9"/>
<circle cx="386.50" cy="200.00" r="3.9"/>
<circle cx="386.50" cy="200.00" r="3.9"/>
<circle cx="386.56" cy="203.53" r="3.9"/>
<circle cx="386.61" cy="207.07" r="3.9"/>
<circle cx="386.67" cy="210.60" r="3.9"/>
<circle cx="386.72" cy="214.13" r="3.9"/>
<circle cx="386.78" cy="217.67" r="3.9"/>
<circle cx="386.83" cy="221.20" r="3.9"/>
<circle cx="386.89" cy="224.73" r="3.9"/>
<circle cx="386.94" cy="228.27" r="3.9"/>
<circle cx="387.00" cy="231.80" r="3.9"/>
<circle cx="389.50" cy="196.00" r="3.9"/>
<circle cx="394.20" cy="193.40" r="3.9"/>
<circle cx="394.20" cy="193.40" r="3.9"/>
<circle cx="394.20" cy="196.93" r="3.9"/>
<circle cx="394.20" cy="200.47" r="3.9"/>
<circle cx="394.20" cy="204.00" r="3.9"/>
<circle cx="394.20" cy="204.00" r="3.9"/>
<circle cx="392.35" cy="206.50" r="3.9"/>
<circle cx="390.50" cy="209.00" r="3.9"/>
<circle cx="386.50" cy="206.00" r="3.9"/>
<circle cx="388.50" cy="203.00" r="3.9"/>
<circle cx="390.50" cy="200.00" r="3.9"/>
<circle cx="389.50" cy="192.00" r="3.9"/>
<circle cx="389.62" cy="195.50" r="3.9"/>
<circle cx="389.75" cy="199.00" r="3.9"/>
<circle cx="389.88" cy="202.50" r="3.9"/>
<circle cx="390.00" cy="206.00" r="3.9"/>
<circle cx="401.50" cy="183.30" r="3.9"/>
<circle cx="405.50" cy="183.30" r="3.9"/>
<circle cx="409.50" cy="183.30" r="3.9"/>
<circle cx="428.00" cy="177.50" r="3.9"/>
<circle cx="431.25" cy="177.50" r="3.9"/>
<circle cx="434.50" cy="177.50" r="3.9"/>
<circle cx="437.75" cy="177.50" r="3.9"/>
<circle cx="441.00" cy="177.50" r="3.9"/>
<circle cx="456.60" cy="190.00" r="3.9"/>
<circle cx="459.20" cy="188.70" r="3.9"/>
<circle cx="461.80" cy="187.40" r="3.9"/>
<circle cx="461.80" cy="187.40" r="3.9"/>
<circle cx="462.35" cy="190.75" r="3.9"/>
<circle cx="462.90" cy="194.10" r="3.9"/>
<circle cx="462.90" cy="194.10" r="3.9"/>
<circle cx="463.95" cy="196.70" r="3.9"/>
<circle cx="465.00" cy="199.30" r="3.9"/>
<circle cx="465.00" cy="199.30" r="3.9"/>
<circle cx="465.00" cy="202.40" r="3.9"/>
<circle cx="465.00" cy="205.50" r="3.9"/>
<circle cx="465.00" cy="199.30" r="3.9"/>
<circle cx="467.05" cy="197.20" r="3.9"/>
<circle cx="469.10" cy="195.10" r="3.9"/>
<circle cx="469.10" cy="195.10" r="3.9"/>
<circle cx="472.20" cy="191.00" r="3.9"/>
<circle cx="472.20" cy="191.00" r="3.9"/>
<circle cx="474.80" cy="188.90" r="3.9"/>
<circle cx="477.40" cy="186.80" r="3.9"/>
<circle cx="460.00" cy="192.00" r="3.9"/>
<circle cx="464.00" cy="191.00" r="3.9"/>
<circle cx="468.00" cy="190.00" r="3.9"/>
<circle cx="459.00" cy="196.00" r="3.9"/>
<circle cx="462.00" cy="197.33" r="3.9"/>
<circle cx="465.00" cy="198.67" r="3.9"/>
<circle cx="468.00" cy="200.00" r="3.9"/>
<circle cx="482.60" cy="181.60" r="3.9"/>
<circle cx="487.80" cy="182.20" r="3.9"/>
<circle cx="494.00" cy="175.40" r="3.9"/>
<circle cx="498.20" cy="178.50" r="3.9"/>
<circle cx="498.20" cy="178.50" r="3.9"/>
<circle cx="497.20" cy="183.70" r="3.9"/>
<circle cx="497.20" cy="183.70" r="3.9"/>
<circle cx="501.30" cy="183.70" r="3.9"/>
<circle cx="504.40" cy="177.50" r="3.9"/>
<circle cx="507.55" cy="177.50" r="3.9"/>
<circle cx="510.70" cy="177.50" r="3.9"/>
<circle cx="510.70" cy="177.50" r="3.9"/>
<circle cx="513.80" cy="177.25" r="3.9"/>
<circle cx="516.90" cy="177.00" r="3.9"/>
<circle cx="516.90" cy="177.00" r="3.9"/>
<circle cx="521.10" cy="178.50" r="3.9"/>
<circle cx="521.10" cy="178.50" r="3.9"/>
<circle cx="522.15" cy="181.10" r="3.9"/>
<circle cx="523.20" cy="183.70" r="3.9"/>
<circle cx="523.20" cy="183.70" r="3.9"/>
<circle cx="526.30" cy="187.90" r="3.9"/>
<circle cx="526.30" cy="187.90" r="3.9"/>
<circle cx="530.40" cy="191.00" r="3.9"/>
<circle cx="530.40" cy="191.00" r="3.9"/>
<circle cx="533.00" cy="188.90" r="3.9"/>
<circle cx="535.60" cy="186.80" r="3.9"/>
<circle cx="530.40" cy="196.20" r="3.9"/>
<circle cx="531.10" cy="199.30" r="3.9"/>
<circle cx="531.80" cy="202.40" r="3.9"/>
<circle cx="532.50" cy="205.50" r="3.9"/>
<circle cx="532.50" cy="205.50" r="3.9"/>
<circle cx="532.50" cy="208.97" r="3.9"/>
<circle cx="532.50" cy="212.43" r="3.9"/>
<circle cx="532.50" cy="215.90" r="3.9"/>
<circle cx="630.80" cy="190.00" r="3.9"/>
<circle cx="630.84" cy="193.55" r="3.9"/>
<circle cx="630.87" cy="197.09" r="3.9"/>
<circle cx="630.91" cy="200.64" r="3.9"/>
<circle cx="630.95" cy="204.18" r="3.9"/>
<circle cx="630.98" cy="207.73" r="3.9"/>
<circle cx="631.02" cy="211.27" r="3.9"/>
<circle cx="631.05" cy="214.82" r="3.9"/>
<circle cx="631.09" cy="218.36" r="3.9"/>
<circle cx="631.13" cy="221.91" r="3.9"/>
<circle cx="631.16" cy="225.45" r="3.9"/>
<circle cx="631.20" cy="229.00" r="3.9"/>
<circle cx="635.50" cy="192.50" r="3.9"/>
<circle cx="635.60" cy="196.00" r="3.9"/>
<circle cx="635.70" cy="199.50" r="3.9"/>
<circle cx="635.80" cy="203.00" r="3.9"/>
<circle cx="635.90" cy="206.50" r="3.9"/>
<circle cx="636.00" cy="210.00" r="3.9"/>
<circle cx="639.50" cy="196.00" r="3.9"/>
<circle cx="639.83" cy="200.00" r="3.9"/>
<circle cx="640.17" cy="204.00" r="3.9"/>
<circle cx="640.50" cy="208.00" r="3.9"/>
<circle cx="650.80" cy="180.70" r="3.9"/>
<circle cx="654.17" cy="179.40" r="3.9"/>
<circle cx="657.53" cy="178.10" r="3.9"/>
<circle cx="660.90" cy="176.80" r="3.9"/>
<circle cx="707.20" cy="207.60" r="3.9"/>
<circle cx="708.75" cy="205.00" r="3.9"/>
<circle cx="710.30" cy="202.40" r="3.9"/>
<circle cx="710.30" cy="202.40" r="3.9"/>
<circle cx="709.50" cy="199.80" r="3.9"/>
<circle cx="708.70" cy="197.20" r="3.9"/>
<circle cx="708.70" cy="197.20" r="3.9"/>
<circle cx="709.20" cy="194.10" r="3.9"/>
<circle cx="709.20" cy="194.10" r="3.9"/>
<circle cx="710.80" cy="191.00" r="3.9"/>
<circle cx="710.80" cy="191.00" r="3.9"/>
<circle cx="712.60" cy="188.90" r="3.9"/>
<circle cx="714.40" cy="186.80" r="3.9"/>
<circle cx="714.40" cy="186.80" r="3.9"/>
<circle cx="717.25" cy="185.50" r="3.9"/>
<circle cx="720.10" cy="184.20" r="3.9"/>
<circle cx="720.10" cy="184.20" r="3.9"/>
<circle cx="724.30" cy="182.70" r="3.9"/>
<circle cx="708.70" cy="212.00" r="3.9"/>
<circle cx="708.70" cy="215.73" r="3.9"/>
<circle cx="708.70" cy="219.47" r="3.9"/>
<circle cx="708.70" cy="223.20" r="3.9"/>
<circle cx="720.10" cy="190.00" r="3.9"/>
<circle cx="725.30" cy="191.00" r="3.9"/>
<circle cx="725.30" cy="191.00" r="3.9"/>
<circle cx="729.50" cy="194.10" r="3.9"/>
<circle cx="729.50" cy="194.10" r="3.9"/>
<circle cx="734.70" cy="193.00" r="3.9"/>
<circle cx="734.70" cy="193.00" r="3.9"/>
<circle cx="737.80" cy="192.00" r="3.9"/>
<circle cx="729.50" cy="204.50" r="3.9"/>
<circle cx="730.55" cy="201.90" r="3.9"/>
<circle cx="731.60" cy="199.30" r="3.9"/>
<circle cx="731.60" cy="199.30" r="3.9"/>
<circle cx="733.70" cy="198.30" r="3.9"/>
<circle cx="742.00" cy="187.90" r="3.9"/>
<circle cx="744.05" cy="185.30" r="3.9"/>
<circle cx="746.10" cy="182.70" r="3.9"/>
<circle cx="746.10" cy="182.70" r="3.9"/>
<circle cx="748.20" cy="182.70" r="3.9"/>
<circle cx="748.20" cy="182.70" r="3.9"/>
<circle cx="751.52" cy="182.70" r="3.9"/>
<circle cx="754.84" cy="182.70" r="3.9"/>
<circle cx="758.16" cy="182.70" r="3.9"/>
<circle cx="761.48" cy="182.70" r="3.9"/>
<circle cx="764.80" cy="182.70" r="3.9"/>
<circle cx="764.80" cy="182.70" r="3.9"/>
<circle cx="766.90" cy="183.70" r="3.9"/>
<circle cx="773.20" cy="186.80" r="3.9"/>
<circle cx="774.75" cy="189.40" r="3.9"/>
<circle cx="776.30" cy="192.00" r="3.9"/>
<circle cx="776.30" cy="192.00" r="3.9"/>
<circle cx="777.30" cy="196.20" r="3.9"/>
<circle cx="777.30" cy="196.20" r="3.9"/>
<circle cx="776.30" cy="201.40" r="3.9"/>
<circle cx="776.30" cy="201.40" r="3.9"/>
<circle cx="776.30" cy="205.57" r="3.9"/>
<circle cx="776.30" cy="209.73" r="3.9"/>
<circle cx="776.30" cy="213.90" r="3.9"/>
</g>
<circle cx="337.7" cy="240" r="3.9" fill="#000"/>
<circle cx="349.3" cy="184.3" r="3.9" fill="#000"/>
<circle cx="390.5" cy="355" r="3.9" fill="#000"/>
<circle cx="454.6" cy="350" r="3.9" fill="#000"/>
<circle cx="454.6" cy="351.5" r="3.9" fill="#000"/>
<circle cx="636.4" cy="343.2" r="3.9" fill="#000"/>
<circle cx="707.3" cy="346.4" r="3.9" fill="#000"/>
<circle cx="454.6" cy="177.6" r="3.9" fill="#000"/>
<circle cx="443.1" cy="177.5" r="3.9" fill="#000"/>
<circle cx="538.8" cy="181.6" r="3.9" fill="#000"/>
<circle cx="455.1" cy="205" r="3.9" fill="#000"/>
<circle cx="454.6" cy="221.3" r="3.9" fill="#000"/>
<circle cx="536.2" cy="186.9" r="3.9" fill="#000"/>
<circle cx="540.8" cy="181.8" r="3.9" fill="#000"/>
<circle cx="549.3" cy="180.2" r="3.9" fill="#000"/>
<circle cx="560.6" cy="177.3" r="3.9" fill="#000"/>
<circle cx="583" cy="175.1" r="3.9" fill="#000"/>
<circle cx="630.1" cy="186.3" r="3.9" fill="#000"/>
<circle cx="676.3" cy="175.4" r="3.9" fill="#000"/>
<circle cx="683.4" cy="175.4" r="3.9" fill="#000"/>
<circle cx="697.3" cy="174.9" r="3.9" fill="#000"/>
<circle cx="703.5" cy="180.1" r="3.9" fill="#000"/>
<circle cx="782.2" cy="183" r="3.9" fill="#000"/>
<circle cx="791.2" cy="179.8" r="3.9" fill="#000"/>
<circle cx="802.1" cy="177.3" r="3.9" fill="#000"/>
<circle cx="817.4" cy="176" r="3.9" fill="#000"/>
<rect x="337.5" y="163.5" width="488.0" height="208.0" fill="none" stroke="#262626" stroke-width="1"/>
<text x="337.5" y="387" text-anchor="middle" font-family="Liberation Sans" font-size="13" fill="#262626">0</text>
<text x="386.3" y="387" text-anchor="middle" font-family="Liberation Sans" font-size="13" fill="#262626">1</text>
<text x="435.1" y="387" text-anchor="middle" font-family="Liberation Sans" font-size="13" fill="#262626">2</text>
<text x="483.9" y="387" text-anchor="middle" font-family="Liberation Sans" font-size="13" fill="#262626">3</text>
<text x="532.7" y="387" text-anchor="middle" font-family="Liberation Sans" font-size="13" fill="#262626">4</text>
<text x="581.5" y="387" text-anchor="middle" font-family="Liberation Sans" font-size="13" fill="#262626">5</text>
<text x="630.3" y="387" text-anchor="middle" font-family="Liberation Sans" font-size="13" fill="#262626">6</text>
<text x="679.1" y="387" text-anchor="middle" font-family="Liberation Sans" font-size="13" fill="#262626">7</text>
<text x="727.9" y="387" text-anchor="middle" font-family="Liberation Sans" font-size="13" fill="#262626">8</text>
<text x="776.7" y="387" text-anchor="middle" font-family="Liberation Sans" font-size="13" fill="#262626">9</text>
<text x="825.5" y="387" text-anchor="middle" font-family="Liberation Sans" font-size="13" fill="#262626">10</text>
<text x="582" y="401.5" text-anchor="middle" font-family="Liberation Sans" font-size="13" fill="#262626">time (sec)</text>
<text transform="translate(296,268) rotate(-90)" x="0" y="0" text-anchor="middle" font-family="Liberation Sans" font-size="13" fill="#262626">step (sec)</text>
<text x="324.7" y="162.7" font-family="Liberation Sans" font-size="10" fill="#262626">0</text>
<text x="325" y="167.9" text-anchor="end" font-family="Liberation Sans" font-size="13" fill="#262626">10</text>
<text x="321.7" y="232.3" font-family="Liberation Sans" font-size="10" fill="#262626">-5</text>
<text x="322" y="237.5" text-anchor="end" font-family="Liberation Sans" font-size="13" fill="#262626">10</text>
<text x="317.2" y="301.9" font-family="Liberation Sans" font-size="10" fill="#262626">-10</text>
<text x="317.5" y="307.1" text-anchor="end" font-family="Liberation Sans" font-size="13" fill="#262626">10</text>
<text x="316.9" y="371.5" font-family="Liberation Sans" font-size="10" fill="#262626">-15</text>
<text x="317.2" y="376.7" text-anchor="end" font-family="Liberation Sans" font-size="13" fill="#262626">10</text>
<rect x="841.5" y="294.5" width="139" height="77" fill="#fff" stroke="#262626" stroke-width="1"/>
<line x1="845" y1="302.5" x2="885.5" y2="302.5" stroke="#3300ff" stroke-width="1"/><circle cx="865.5" cy="302.5" r="1.5" fill="#3300ff"/>
<line x1="845" y1="314.5" x2="880" y2="314.5" stroke="#000" stroke-width="3" stroke-dasharray="12 10"/>
<circle cx="865.5" cy="326.5" r="3.8" fill="#e8402f"/>
<circle cx="865.5" cy="338.5" r="3.8" fill="#f0a30a"/>
<circle cx="865.5" cy="350.5" r="3.8" fill="#0a9a20"/>
<circle cx="865.5" cy="362.5" r="3.8" fill="#000"/>
<text x="889" y="304.8" font-family="Liberation Sans" font-size="11.3" fill="#262626">Step Size</text>
<text x="889" y="316.90000000000003" font-family="Liberation Sans" font-size="11.3" fill="#262626">Max Step Size</text>
<text x="889" y="329.0" font-family="Liberation Sans" font-size="11.3" fill="#262626">Solver Exception</text>
<text x="889" y="341.1" font-family="Liberation Sans" font-size="11.3" fill="#262626">Zero Crossing</text>
<text x="889" y="353.2" font-family="Liberation Sans" font-size="11.3" fill="#262626">Solver Reset</text>
<text x="889" y="365.3" font-family="Liberation Sans" font-size="11.3" fill="#262626">Jacobian Update</text>
</svg>
<!-- bottom tabs -->
<div class="a" style="left:254px;top:406px;width:787px;height:23px;background:#fff"></div>
<div class="a" style="left:254px;top:406px;width:17px;height:23px;background:#fff;border-right:1px solid #c8c8c8;border-bottom:1px solid #c8c8c8"></div>
<div class="a" style="left:261px;top:413px;width:4px;height:1px;background:#8a8a8a"></div><div class="a" style="left:261px;top:415px;width:4px;height:1px;background:#8a8a8a"></div><div class="a" style="left:261px;top:417px;width:4px;height:1px;background:#8a8a8a"></div><div class="a" style="left:261px;top:419px;width:4px;height:1px;background:#8a8a8a"></div>
<div class="a" style="left:261px;top:128px;width:4px;height:1px;background:#8a8a8a"></div><div class="a" style="left:261px;top:130px;width:4px;height:1px;background:#8a8a8a"></div><div class="a" style="left:261px;top:132px;width:4px;height:1px;background:#8a8a8a"></div><div class="a" style="left:261px;top:134px;width:4px;height:1px;background:#8a8a8a"></div>
<div class="tab" style="left:271px;width:87px;background:#fff;border-top-color:#2b8ae2;border-left:0;border-bottom:0;color:#262626"><span style="left:8px">Suggestion</span></div>
<div class="tab" style="left:358px;width:104px"><span style="left:8px">Zero Crossing</span></div>
<div class="tab" style="left:461px;width:118px"><span style="left:8px">Solver Exception</span></div>
<div class="tab" style="left:579px;width:98px"><span style="left:8px">Solver Reset</span></div>
<div class="tab" style="left:677px;width:202px"><span style="left:7px">States Below Absolute Tolerance</span></div>
<div class="tab" style="left:879px;width:123px;border-right:1px solid #c8c8c8"><span style="left:8px">Jacobian Analysis</span></div>
<div class="a" style="left:1019px;top:412px;width:2px;height:2px;background:#555"></div><div class="a" style="left:1019px;top:416px;width:2px;height:2px;background:#555"></div><div class="a" style="left:1019px;top:420px;width:2px;height:2px;background:#555"></div>
<div class="a" style="left:1019px;top:127px;width:2px;height:2px;background:#555"></div><div class="a" style="left:1019px;top:131px;width:2px;height:2px;background:#555"></div><div class="a" style="left:1019px;top:135px;width:2px;height:2px;background:#555"></div>
<div class="a" style="left:254px;top:429px;width:787px;height:172px;background:#f4f4f4"></div>
<div class="a" style="left:256px;top:429.8px;width:785px;font-family:'Liberation Serif',serif;font-size:16px;line-height:17.6px;color:#000">
<span style="color:#008000">There are states with values less than the absolute tolerance throughout the simulation. These states may not be solved to the specified tolerance.</span> Explore the states in the States Below Absolute Tolerance table. If these states are not noise, lower the absolute tolerance value to less than these state values.</div>
</body></html>
